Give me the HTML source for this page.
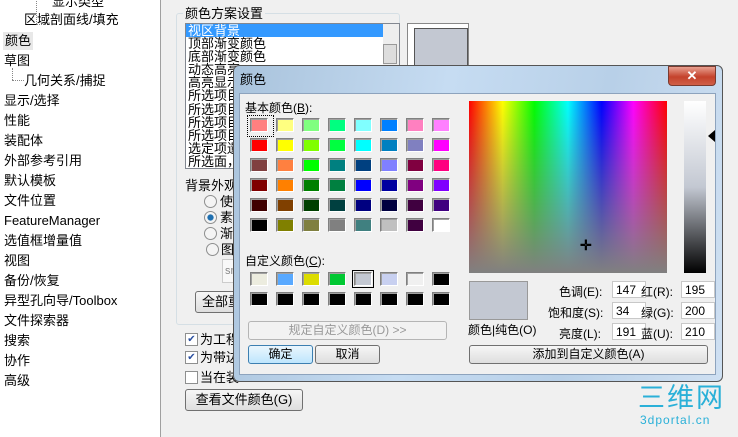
<html><head><style>
body{margin:0;width:738px;height:437px;overflow:hidden;background:#f0f0f0;font:12px "Liberation Sans","Noto Sans CJK SC",sans-serif;color:#000;position:relative}
.a{position:absolute;white-space:nowrap}
#left{position:absolute;left:0;top:0;width:160px;height:437px;background:#fff;border-right:1px solid #a0a0a0}
#left div{position:absolute;font-size:13px;white-space:nowrap;line-height:16px}
.sw{position:absolute;width:16px;height:12px;border:1px solid #fff;border-top-color:#808080;border-left-color:#808080;box-shadow:inset 1px 1px #a0a0a0}
.btn{position:absolute;border:1px solid #707070;border-radius:3px;background:linear-gradient(#f6f6f6,#dedede);text-align:center;font-size:12px}
.inp{position:absolute;width:34px;height:17px;background:#fff;border:1px solid #c8c8c8;font-size:12px;line-height:17px;padding-left:3px;box-sizing:border-box}
.cb{position:absolute;width:11px;height:11px;border:1px solid #8e8f8f;background:#fff;font-size:10px;line-height:11px;text-align:center;color:#2a4fa0}
.rd{position:absolute;width:11px;height:11px;border:1px solid #8e8f8f;border-radius:50%;background:#f4f4f4}
</style></head><body>
<div id="left">
<div style="left:36px;top:-2px;border-left:1px dotted #888;height:26px"></div>
<div style="left:36px;top:24px;width:14px;border-top:1px dotted #888"></div>
<div style="left:52px;top:-6px;">显示类型</div>
<div style="left:24px;top:12px;">区域剖面线/填充</div>
<div style="left:3px;top:32px;background:#e8e8e8;padding:1px 2px">颜色</div>
<div style="left:4px;top:53px;">草图</div>
<div style="left:12px;top:68px;border-left:1px dotted #888;height:12px"></div>
<div style="left:12px;top:80px;width:12px;border-top:1px dotted #888"></div>
<div style="left:24px;top:73px;">几何关系/捕捉</div>
<div style="left:4px;top:93px;">显示/选择</div>
<div style="left:4px;top:113px;">性能</div>
<div style="left:4px;top:133px;">装配体</div>
<div style="left:4px;top:153px;">外部参考引用</div>
<div style="left:4px;top:173px;">默认模板</div>
<div style="left:4px;top:193px;">文件位置</div>
<div style="left:4px;top:213px;">FeatureManager</div>
<div style="left:4px;top:233px;">选值框增量值</div>
<div style="left:4px;top:253px;">视图</div>
<div style="left:4px;top:273px;">备份/恢复</div>
<div style="left:4px;top:293px;">异型孔向导/Toolbox</div>
<div style="left:4px;top:313px;">文件探索器</div>
<div style="left:4px;top:333px;">搜索</div>
<div style="left:4px;top:353px;">协作</div>
<div style="left:4px;top:373px;">高级</div>
</div>
<div class="a" style="left:176px;top:13px;width:222px;height:310px;border:1px solid #d5dfe5;border-radius:3px"></div>
<div class="a" style="left:183px;top:3px;background:#f0f0f0;padding:0 2px;font-size:13px">颜色方案设置</div>
<div class="a" style="left:185px;top:23px;width:213px;height:144px;background:#fff;border:1px solid #828790;font-size:13px;line-height:13.1px;overflow:hidden">
<div style="background:#3399ff;color:#fff;width:195px;padding-left:2px">视区背景</div>
<div style="padding-left:2px">顶部渐变颜色<br>底部渐变颜色<br>动态高亮<br>高亮显示<br>所选项目<br>所选项目<br>所选项目<br>所选项目<br>选定项遗<br>所选面，</div>
<div style="position:absolute;right:0;top:0;width:16px;height:144px;background:#eee"></div>
<div style="position:absolute;right:2px;top:20px;width:12px;height:18px;border:1px solid #999;background:#ddd"></div></div>
<div class="a" style="left:407px;top:23px;width:60px;height:46px;border:1px solid #888;background:#fff"></div>
<div class="a" style="left:414px;top:28px;width:52px;height:40px;border:1px solid #555;background:#c3c8d2"></div>
<div class="a" style="left:185px;top:175px;font-size:13px">背景外观</div>
<div class="rd" style="left:204px;top:195px"></div><div class="a" style="left:220px;top:191px;font-size:13px">使</div>
<div class="rd" style="left:204px;top:211px;background:radial-gradient(#1e6fb0 35%,#f4f4f4 45%)"></div><div class="a" style="left:220px;top:207px;font-size:13px">素</div>
<div class="rd" style="left:204px;top:227px"></div><div class="a" style="left:220px;top:223px;font-size:13px">渐</div>
<div class="rd" style="left:206px;top:243px"></div><div class="a" style="left:221px;top:239px;font-size:13px">图</div>
<div class="a" style="left:222px;top:259px;width:20px;height:22px;border:1px solid #ccc;background:#f8f8f8;font-size:11px;color:#888;line-height:22px;padding-left:2px">sn</div>
<div class="btn" style="left:195px;top:291px;width:50px;height:20px;line-height:20px;text-align:left;padding-left:6px;font-size:13px">全部重</div>
<div class="cb" style="left:185px;top:333px">✔</div><div class="a" style="left:200px;top:329px;font-size:13px">为工程</div>
<div class="cb" style="left:185px;top:351px">✔</div><div class="a" style="left:200px;top:347px;font-size:13px">为带边</div>
<div class="cb" style="left:185px;top:371px"></div><div class="a" style="left:200px;top:367px;font-size:13px">当在装</div>
<div class="btn" style="left:185px;top:389px;width:116px;height:20px;line-height:20px;font-size:13px">查看文件颜色(G)</div>

<div class="a" style="left:233px;top:65px;width:488px;height:315px;border:1px solid #555;border-radius:6px;background:linear-gradient(100deg,#a9c3dc,#c6dcf2 40%,#b8d0e8 70%,#cfe0f2)"></div>
<div class="a" style="left:240px;top:69px;font-size:13px">颜色</div>
<div class="a" style="left:668px;top:66px;width:46px;height:18px;border:1px solid #7a3b30;border-radius:0 0 4px 4px;background:linear-gradient(#e8a090,#c4422c 55%,#d06048);color:#fff;text-align:center;font-weight:bold;font-size:13px;line-height:18px">✕</div>
<div class="a" style="left:239px;top:93px;width:475px;height:280px;background:#f0f0f0;border:1px solid #8da3bd"></div>
<div class="a" style="left:245px;top:99px;font-size:12px">基本颜色(<u>B</u>):</div>
<div class="a" style="left:247px;top:115px;width:25px;height:20px;border:1px dotted #000"></div>
<div id="grid"></div>
<div class="a" style="left:245px;top:252px;font-size:12px">自定义颜色(<u>C</u>):</div>
<div class="btn" style="left:248px;top:321px;width:197px;height:17px;line-height:17px;color:#999;border-color:#b5b5b5;background:#f2f2f2">规定自定义颜色(D) &gt;&gt;</div>
<div class="btn" style="left:248px;top:345px;width:63px;height:17px;line-height:17px;border-color:#3c7fb1;background:linear-gradient(#eaf6fd,#bee6fd)">确定</div>
<div class="btn" style="left:315px;top:345px;width:63px;height:17px;line-height:17px">取消</div>
<div class="a" style="left:469px;top:101px;width:198px;height:172px;background:linear-gradient(rgba(128,128,128,0),#808080),linear-gradient(90deg,#f00,#ff0 17%,#0f0 33%,#0ff 50%,#00f 67%,#f0f 83%,#f00)"></div>
<div class="a" style="left:580px;top:238px;font-size:14px;font-weight:bold;line-height:14px">✛</div>
<div class="a" style="left:684px;top:101px;width:22px;height:172px;background:linear-gradient(#fff,#c3c8d2 50%,#000)"></div>
<div class="a" style="left:708px;top:130px;width:0;height:0;border:6px solid transparent;border-right:7px solid #000;border-left:0"></div>
<div class="a" style="left:469px;top:281px;width:57px;height:37px;background:#c3c8d2;border:1px solid #999"></div>
<div class="a" style="left:468px;top:321px">颜色|纯色(O)</div>
<div class="a" style="left:559px;top:283px">色调(E):</div><div class="inp" style="left:612px;top:281px">147</div>
<div class="a" style="left:548px;top:304px">饱和度(S):</div><div class="inp" style="left:612px;top:302px">34</div>
<div class="a" style="left:559px;top:325px">亮度(L):</div><div class="inp" style="left:612px;top:323px">191</div>
<div class="a" style="left:641px;top:283px">红(R):</div><div class="inp" style="left:681px;top:281px">195</div>
<div class="a" style="left:641px;top:304px">绿(G):</div><div class="inp" style="left:681px;top:302px">200</div>
<div class="a" style="left:641px;top:325px">蓝(U):</div><div class="inp" style="left:681px;top:323px">210</div>
<div class="btn" style="left:469px;top:345px;width:237px;height:17px;line-height:17px">添加到自定义颜色(A)</div>
<div class="a" style="left:638px;top:383px;font-size:27px;color:#2ab0d8;letter-spacing:2px;line-height:30px">三维网</div>
<div class="a" style="left:640px;top:413px;font-size:12px;color:#2ab0d8;letter-spacing:1px">3dportal.cn</div>
<script>
var b=["ff8080","ffff80","80ff80","00ff80","80ffff","0080ff","ff80c0","ff80ff","ff0000","ffff00","80ff00","00ff40","00ffff","0080c0","8080c0","ff00ff","804040","ff8040","00ff00","008080","004080","8080ff","800040","ff0080","800000","ff8000","008000","008040","0000ff","0000a0","800080","8000ff","400000","804000","004000","004040","000080","000040","400040","400080","000000","808000","808040","808080","408080","c0c0c0","400040","ffffff"];
var c=["ececdf","59a9ff","dcdc00","00c832","c3c8d2","c8d0f0","f0f0f0","000000","000000","000000","000000","000000","000000","000000","000000","000000"];
var h="";
b.forEach(function(v,i){h+='<div class="sw" style="left:'+(250+26*(i%8))+'px;top:'+(118+20*Math.floor(i/8))+'px;background:#'+v+'"></div>';});
c.forEach(function(v,i){h+='<div class="sw" style="left:'+(250+26*(i%8))+'px;top:'+(272+20*Math.floor(i/8))+'px;background:#'+v+(i==4?';outline:1px solid #000;outline-offset:1px':'')+'"></div>';});
document.getElementById("grid").innerHTML=h;
</script>
</body></html>
